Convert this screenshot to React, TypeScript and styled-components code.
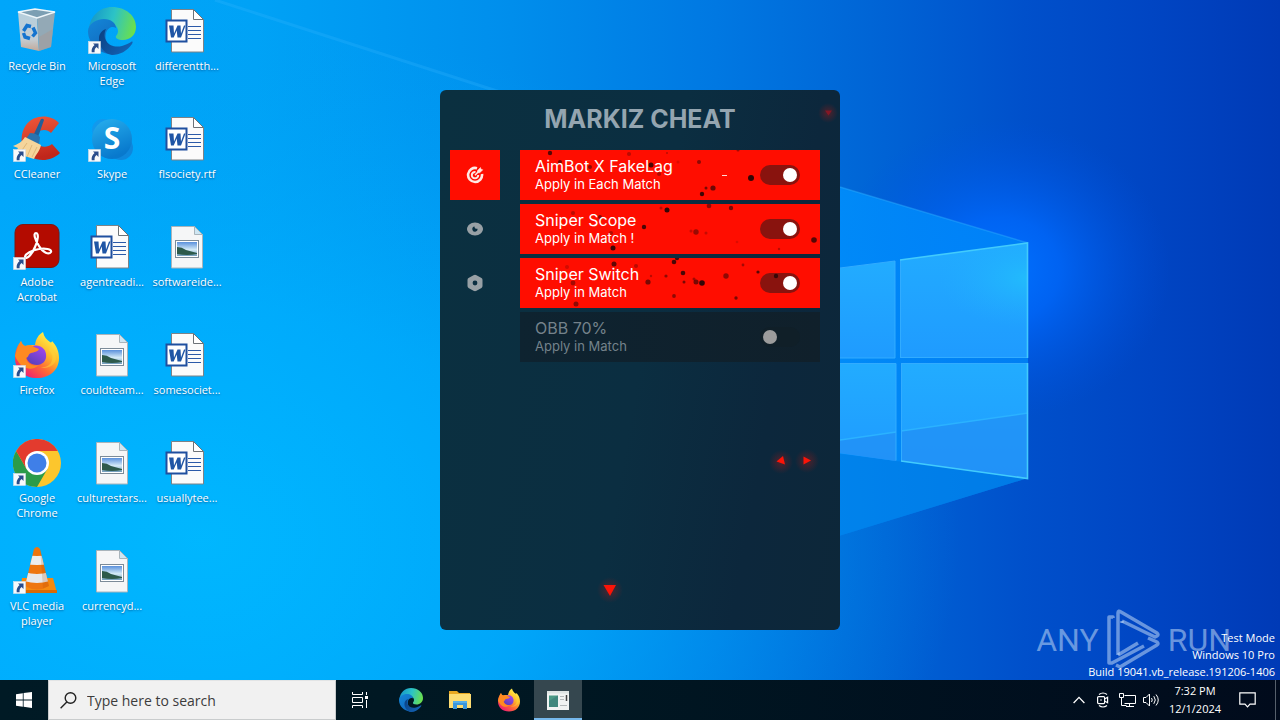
import React, { useId } from "react";
import styled, { createGlobalStyle } from "styled-components";

const UI = `"Open Sans", "Noto Sans", sans-serif`;
const APP = `Inter, "Open Sans", sans-serif`;

const GlobalStyle = createGlobalStyle`
  *, *::before, *::after { box-sizing: border-box; }
  body { margin: 0; font-family: ${UI}; }
  button, input { font: inherit; }
`;

const Page = styled.div`
  position: relative;
  min-height: 100vh;
  display: flex;
  flex-direction: column;
  overflow: hidden;
`;

const Wallpaper = styled.svg`
  position: absolute;
  inset: 0;
  width: 100%;
  height: 100%;
`;

const Desktop = styled.main`
  position: relative;
  flex: 1;
`;

const IconGrid = styled.ul`
  margin: 0;
  padding: 0;
  list-style: none;
  display: grid;
  grid-template-rows: repeat(6, 108px);
  grid-auto-columns: 74px;
  grid-auto-flow: column;
  column-gap: 1px;
  justify-content: start;
`;

const Shortcut = styled.button`
  width: 100%;
  height: 100%;
  padding: 7px 0 0;
  border: 0;
  background: none;
  display: flex;
  flex-direction: column;
  align-items: center;
  justify-content: flex-start;
  gap: 3px;
  color: #fff;
`;

const ShortcutLabel = styled.span`
  font-size: 11px;
  line-height: 15px;
  text-align: center;
  white-space: pre-line;
  text-shadow: 0 1px 2px rgba(0, 30, 80, 0.55);
`;

const Cell = styled.li<{ $column: number }>`
  grid-column: ${(p) => p.$column};
`;

const WindowLayer = styled.div`
  position: absolute;
  inset: 0;
  display: grid;
  place-items: center;
  pointer-events: none;
`;

const CheatWindow = styled.section`
  position: relative;
  width: 400px;
  min-height: 540px;
  border-radius: 6px;
  padding: 0 20px 0 10px;
  pointer-events: auto;
  font-family: ${APP};
  background: linear-gradient(100deg, #0b3040 0%, #0b2e41 50%, #0c273c 78%, #0d2739 100%);
`;

const Title = styled.h1`
  margin: 0;
  padding-left: 10px;
  height: 60px;
  line-height: 58px;
  font-size: 25px;
  font-weight: 700;
  text-align: center;
  color: #94a5b0;
`;

const WindowBody = styled.div`
  display: flex;
  gap: 20px;
`;

const Nav = styled.nav`
  display: flex;
  flex-direction: column;
  gap: 4px;
`;

const NavButton = styled.button<{ $active?: boolean }>`
  width: 50px;
  height: 50px;
  padding: 0;
  border: 0;
  display: grid;
  place-items: center;
  color: ${(p) => (p.$active ? "#ffe9e4" : "#98a0a5")};
  background: ${(p) => (p.$active ? "#ff0d00" : "transparent")};
`;

const Options = styled.div`
  flex: 1;
  display: flex;
  flex-direction: column;
  gap: 4px;
`;

const OptionRow = styled.label<{ $on: boolean }>`
  position: relative;
  height: 50px;
  padding: 0 20px 0 15px;
  display: flex;
  align-items: center;
  justify-content: space-between;
  color: ${(p) => (p.$on ? "#fff" : "#74828b")};
  background: ${(p) => (p.$on ? "#ff0d00" : "linear-gradient(90deg, #0e2330, #10202b)")};
`;

const Specks = styled.svg`
  position: absolute;
  inset: 0;
  width: 100%;
  height: 100%;
`;

const OptionText = styled.span`
  position: relative;
  z-index: 1;
  display: flex;
  flex-direction: column;
`;

const OptionName = styled.span`
  font-size: 16px;
  line-height: 18px;
`;

const OptionHint = styled.span`
  font-size: 13px;
  line-height: 18px;
`;

const Toggle = styled.input`
  appearance: none;
  margin: 0;
  width: 40px;
  height: 20px;
  border-radius: 10px;
  background: #101f28;
  display: flex;
  align-items: center;
  padding: 0 3px;

  &::before {
    content: "";
    width: 14px;
    height: 14px;
    border-radius: 50%;
    background: #9c9c9c;
  }
  &:checked {
    background: #89130e;
    justify-content: flex-end;
  }
  &:checked::before {
    background: #fff;
  }
`;

const Particles = styled.svg`
  position: absolute;
  inset: 0;
  width: 100%;
  height: 100%;
  pointer-events: none;
`;

const Watermark = styled.div`
  position: absolute;
  right: 49px;
  bottom: 8px;
  height: 64px;
  display: flex;
  align-items: center;
  gap: 7px;
  color: rgba(186, 212, 244, 0.56);
  font-family: Roboto, "Liberation Sans", sans-serif;
  font-size: 32px;
  line-height: 64px;
`;

const BuildInfo = styled.div`
  position: absolute;
  right: 5px;
  bottom: 0;
  display: flex;
  flex-direction: column;
  text-align: right;
  font-size: 11px;
  line-height: 17px;
  color: #fff;
`;

const Taskbar = styled.footer`
  position: relative;
  height: 40px;
  display: flex;
  justify-content: space-between;
  background: linear-gradient(90deg, #001a25 0%, #001722 45%, #010b1c 100%);
`;

const TaskGroup = styled.div`
  display: flex;
  gap: 1px;
`;

const TaskButton = styled.button<{ $active?: boolean }>`
  width: 48px;
  height: 40px;
  padding: 0;
  border: 0;
  display: grid;
  place-items: center;
  color: #fff;
  background: ${(p) => (p.$active ? "#35474f" : "transparent")};
  box-shadow: ${(p) => (p.$active ? "inset 0 -2px #76b9ed" : "none")};
`;

const StartGroup = styled.div`
  display: flex;
  padding-right: 2px;
`;

const SearchBox = styled.label`
  width: 288px;
  padding: 0 10px 0 11px;
  display: flex;
  align-items: center;
  gap: 10px;
  background: #f1f1f1;
  border: 1px solid #c9cccd;
  border-top-color: #e2e4e5;
`;

const SearchInput = styled.input`
  flex: 1;
  min-width: 0;
  padding: 0;
  border: 0;
  outline: 0;
  background: none;
  font-size: 14px;
  color: #333;
  &::placeholder {
    color: #3c3c3c;
    opacity: 1;
  }
`;

const Tray = styled.div`
  display: flex;
  align-items: center;
`;

const TrayButton = styled.button<{ $wide?: boolean }>`
  width: ${(p) => (p.$wide ? 40 : 24)}px;
  height: 40px;
  padding: 0;
  border: 0;
  background: none;
  display: grid;
  place-items: center;
  color: #fff;
`;

const Clock = styled.time`
  width: 64px;
  font-size: 11px;
  line-height: 18px;
  text-align: center;
  white-space: pre-line;
  color: #fff;
`;

const ShowDesktop = styled.button`
  width: 5px;
  height: 40px;
  margin-left: 8px;
  padding: 0;
  border: 0;
  border-left: 1px solid #56606c;
  background: none;
`;

/* ---------- desktop icons, all on a 48 unit square ---------- */

const Arrow = () => (
  <g>
    <rect x="0.5" y="34.5" width="12" height="12" fill="#f7f9fb" stroke="#d4dde6" strokeWidth="0.6" />
    <path d="M5 36.500h5.500v5.500l-1.900-1.900c-1.700 1.300-2.200 2.600-2 5.100H3.700c-.4-3 .6-5.200 2.900-7.100z" fill="#294d8c" />
  </g>
);

const RecycleBin = () => {
  const id = useId();
  return (
    <svg width="48" height="48" viewBox="0 0 48 48">
      <defs>
        <linearGradient id={id} x1="0" y1="0" x2="0" y2="1">
          <stop offset="0" stopColor="#b4cfde" />
          <stop offset="0.7" stopColor="#c3cdd3" />
          <stop offset="1" stopColor="#c2a999" />
        </linearGradient>
      </defs>
      <path d="M5 5l19 6 2 33-18-4z" fill={`url(#${id})`} />
      <path d="M24 11l18-6-4 35-12 4z" fill="#93a9b6" />
      <path d="M26 30l14-8-2 18-12 4z" fill="#a39d9b" opacity="0.6" />
      <path d="M5 5l17-3 20 3-18 6z" fill="#7c9fb3" stroke="#eef6fa" strokeWidth="1.400" />
      <g fill="none" stroke="#1474cf" strokeWidth="3.400">
        <path d="M10.500 24l3.500-5.500 4 1" />
        <path d="M20 20.500l2.500 5.500-3 3.500" />
        <path d="M17 31.500l-5-1.500-1.500-4" />
      </g>
    </svg>
  );
};

const EdgeIcon = ({ size = 48 }: { size?: number }) => {
  const id = useId();
  return (
    <svg width={size} height={size} viewBox="0 0 48 48">
      <defs>
        <linearGradient id={id + "a"} x1="0" y1="0.3" x2="1" y2="0.5">
          <stop offset="0" stopColor="#1596c9" />
          <stop offset="0.5" stopColor="#2cc3c6" />
          <stop offset="1" stopColor="#6be04c" />
        </linearGradient>
        <linearGradient id={id + "b"} x1="0" y1="0" x2="0.6" y2="1">
          <stop offset="0" stopColor="#1487d8" />
          <stop offset="1" stopColor="#1068bd" />
        </linearGradient>
        <linearGradient id={id + "c"} x1="0" y1="0" x2="1" y2="0.6">
          <stop offset="0" stopColor="#0b3f80" />
          <stop offset="1" stopColor="#1262b4" />
        </linearGradient>
      </defs>
      <path d="M1 22C2 9 12 0 24 0c14 0 24 9 24 20 0 8-6 13-13 13-5 0-8-2-7-4 1-1 2-3 2-5 0-5-5-9-13-9C9 15 3 18 1 22z" fill={`url(#${id}a)`} />
      <path d="M0 24c0-7 8-12 16-12 7 0 12 4 12 9-3-2-8-1-10 5-2 8 3 16 12 19-3 2-5 3-8 2C10 46 0 36 0 24z" fill={`url(#${id}b)`} />
      <path d="M18 22c-5 11 4 20 16 17 4-1 7-3 9-4 2-1 2 0 1 2C39 44 32 48 24 48c-8-1-14-10-13-17 0-4 3-8 7-9z" fill={`url(#${id}c)`} />
    </svg>
  );
};

const FirefoxIcon = ({ size = 48 }: { size?: number }) => {
  const id = useId();
  return (
    <svg width={size} height={size} viewBox="0 0 48 48">
      <defs>
        <linearGradient id={id + "a"} x1="0.8" y1="0.1" x2="0.2" y2="0.9">
          <stop offset="0" stopColor="#fff04a" />
          <stop offset="0.35" stopColor="#ffb829" />
          <stop offset="0.65" stopColor="#ff6a35" />
          <stop offset="1" stopColor="#f0246d" />
        </linearGradient>
        <linearGradient id={id + "b"} x1="0.8" y1="0" x2="0.2" y2="1">
          <stop offset="0" stopColor="#a646f0" />
          <stop offset="1" stopColor="#5540b8" />
        </linearGradient>
      </defs>
      <path d="M8 10c1 3 2 4 4 5 3-1 6-1 10-1 1-6 3-10 8-13 1 5 4 8 7 10 1 1 2 0 2-1 5 5 7 11 7 17 0 12-9 20-22 20C11 47 2 39 2 27c0-7 2-12 6-17z" fill={`url(#${id}a)`} />
      <path d="M17 16c8-4 15 0 16 7 1 7-4 11-9 11-6 0-11-4-11-10z" fill={`url(#${id}b)`} />
      <path d="M2 25C4 17 7 13 8 10c1 3 2 4 4 5 4-1 7-1 9 1l5 2c-1 3-5 3-8 4-3 1-2 4-5 5 1 6 8 9 13 7-5 5-14 5-19-1-2-3-4-5-5-8z" fill="#ff8a21" />
      <path d="M36 20c3 2 4 6 3 9-1 5-6 8-12 7 6 3 15-1 16-8 0-6-3-9-7-12z" fill="#ffd43a" opacity="0.5" />
    </svg>
  );
};

const CCleanerIcon = () => {
  const id = useId();
  return (
    <svg width="48" height="48" viewBox="0 0 48 48">
      <defs>
        <linearGradient id={id} x1="0" y1="0" x2="0.2" y2="1">
          <stop offset="0" stopColor="#f0573a" />
          <stop offset="0.5" stopColor="#d8412a" />
          <stop offset="1" stopColor="#c0261b" />
        </linearGradient>
      </defs>
      <path d="M46 8C38-1 21-1 13 10c-7 10-6 25 5 32 9 5 21 4 29-4L39 29c-5 4-12 4-15-2-3-6 1-12 7-12 3 0 5 1 7 3z" fill={`url(#${id})`} />
      <path d="M28 4q2-1 3 1l-6 17-5-1z" fill="#215f99" />
      <path d="M17 18q6 0 10 4l-1 8-13-6z" fill="#2b73ae" />
      <path d="M12 22l16 8c-1 6-5 9-7 14L2 38l3-5-5-2c5-2 9-4 12-9z" fill="#f5d59b" />
      <path d="M14 28l-7 10m12-8l-5 12m10-10l-5 10" stroke="#dfb778" fill="none" />
      <Arrow />
    </svg>
  );
};

const SkypeIcon = () => {
  const id = useId();
  return (
    <svg width="48" height="48" viewBox="0 0 48 48">
      <defs>
        <linearGradient id={id} x1="0" y1="0" x2="0.4" y2="1">
          <stop offset="0" stopColor="#28b0ee" />
          <stop offset="1" stopColor="#0879cd" />
        </linearGradient>
      </defs>
      <circle cx="15" cy="15" r="11" fill="#1299ec" />
      <circle cx="33" cy="33" r="12" fill="#0e87dc" />
      <circle cx="24" cy="24" r="20" fill={`url(#${id})`} />
      <text x="24" y="34" fontFamily="Open Sans" fontWeight="700" fontSize="30" fill="#fff" textAnchor="middle">S</text>
      <Arrow />
    </svg>
  );
};

const AcrobatIcon = () => (
  <svg width="48" height="48" viewBox="0 0 48 48">
    <rect x="2" y="1.500" width="44" height="43" rx="8" fill="#b30b00" stroke="#7f1611" />
    <path d="M23 10c-3 0-1 7 3 13 4 7 10 9 12 6 1-3-6-4-12-3-7 1-14 5-14 8 1 3 7-2 10-10 3-6 4-14 1-14z" fill="none" stroke="#fff" strokeWidth="2.200" />
    <Arrow />
  </svg>
);

const ChromeIcon = () => (
  <svg width="48" height="48" viewBox="0 0 48 48">
    <circle cx="24" cy="24" r="24" fill="#fcc62d" />
    <path d="M3.200 12A24 24 0 0 0 24 48l10.400-18H13.600z" fill="#2b9b49" />
    <path d="M3.200 12A24 24 0 0 1 44.800 12H24L13.600 30z" fill="#e33b2e" />
    <circle cx="24" cy="24" r="12" fill="#fff" />
    <circle cx="24" cy="24" r="9.500" fill="#3f7fe8" />
    <Arrow />
  </svg>
);

const VlcIcon = () => {
  const id = useId();
  return (
    <svg width="48" height="48" viewBox="0 0 48 48">
      <defs>
        <clipPath id={id}>
          <path d="M21 2q3-4 6 0l9 37q-12 7-24 0z" />
        </clipPath>
      </defs>
      <path d="M9 31h31l4 15H7z" fill="#f58a10" />
      <path d="M7 43h37v3H7z" fill="#d96a05" />
      <g clipPath={`url(#${id})`}>
        <rect width="48" height="48" fill="#ee760f" />
        <path d="M8 7q16 4 32 0v9q-16 4-32 0z" fill="#eceeef" />
        <path d="M8 24q16 6 32 0v9q-16 6-32 0z" fill="#e6e8ea" />
        <path d="M27 0l14 42H30z" fill="#b14a00" opacity="0.2" />
      </g>
      <Arrow />
    </svg>
  );
};

const WordFile = () => (
  <svg width="48" height="48" viewBox="0 0 48 48">
    <path d="M8.500 2.500h22l10 10v32.500h-32z" fill="#fbfbfb" stroke="#7d8287" />
    <path d="M30.500 2.500v10h10z" fill="#fff" stroke="#6d7277" />
    <path d="M25 19.500h13M25 23.500h13M25 27.500h13M25 31.500h13" stroke="#2c5aa8" />
    <rect x="3.500" y="13.500" width="20" height="21" fill="#fff" stroke="#1f4f9f" strokeWidth="2" />
    <path d="M6 18.500h4.500l.5 8 3.500-8H17.500l.5 8 3-8h1.500l-4.500 12h-3.500l-.8-7-3 7H8z" fill="#1f55a5" />
  </svg>
);

const ImageFile = () => {
  const id = useId();
  return (
    <svg width="48" height="48" viewBox="0 0 48 48">
      <defs>
        <linearGradient id={id} x1="0" y1="0" x2="0" y2="1">
          <stop offset="0" stopColor="#5a90dc" />
          <stop offset="0.55" stopColor="#d4ebf7" />
          <stop offset="1" stopColor="#6f9cbb" />
        </linearGradient>
      </defs>
      <path d="M8.500 3.500h23l8 8v33.500h-31z" fill="#f5f6f7" stroke="#a9b4bb" />
      <path d="M31.500 3.500v8h8z" fill="#cfe6f2" stroke="#a9b4bb" />
      <rect x="12.500" y="17.500" width="23" height="17" fill="#fff" stroke="#7c8b98" />
      <rect x="14" y="19" width="20" height="14" fill={`url(#${id})`} />
      <path d="M14 24q5 0 9 3l11 3v1q-10 2-20 0z" fill="#2d5a4b" />
    </svg>
  );
};

const EdgeShortcut = () => (
  <svg width="48" height="48" viewBox="0 0 48 48">
    <EdgeIcon />
    <Arrow />
  </svg>
);

const FirefoxShortcut = () => (
  <svg width="48" height="48" viewBox="0 0 48 48">
    <FirefoxIcon />
    <Arrow />
  </svg>
);

const shortcuts: { column: number; label: string; Icon: React.FC }[] = [
  { column: 1, label: "Recycle Bin", Icon: RecycleBin },
  { column: 1, label: "CCleaner", Icon: CCleanerIcon },
  { column: 1, label: "Adobe\nAcrobat", Icon: AcrobatIcon },
  { column: 1, label: "Firefox", Icon: FirefoxShortcut },
  { column: 1, label: "Google\nChrome", Icon: ChromeIcon },
  { column: 1, label: "VLC media\nplayer", Icon: VlcIcon },
  { column: 2, label: "Microsoft\nEdge", Icon: EdgeShortcut },
  { column: 2, label: "Skype", Icon: SkypeIcon },
  { column: 2, label: "agentreadi...", Icon: WordFile },
  { column: 2, label: "couldteam...", Icon: ImageFile },
  { column: 2, label: "culturestars...", Icon: ImageFile },
  { column: 2, label: "currencyd...", Icon: ImageFile },
  { column: 3, label: "differentth...", Icon: WordFile },
  { column: 3, label: "flsociety.rtf", Icon: WordFile },
  { column: 3, label: "softwareide...", Icon: ImageFile },
  { column: 3, label: "somesociet...", Icon: WordFile },
  { column: 3, label: "usuallytee...", Icon: WordFile },
];

/* ---------- cheat menu ---------- */

// Each speck: x, y, radius, opacity.
type Speck = [number, number, number, number];

const options: { name: string; hint: string; on: boolean; specks: Speck[]; dash?: boolean }[] = [
  {
    name: "AimBot X FakeLag",
    hint: "Apply in Each Match",
    on: true,
    dash: true,
    specks: [
      [30, 3, 2.2, 0.75], [40, 12, 2, 0.6], [70, 17, 2, 0.5], [109, 4, 2, 0.3], [131, 15, 2.5, 0.8],
      [139, 24, 2, 0.35], [158, 12, 1.5, 0.15], [179, 12, 2, 0.5], [231, 28, 3, 0.9], [193, 38, 2.6, 0.65],
      [186, 38, 1.5, 0.6], [182, 44, 2.2, 0.85], [128, 37, 1.5, 0.6], [218, 0, 1.5, 0.4], [147, 3, 1, 0.3],
    ],
  },
  {
    name: "Sniper Scope",
    hint: "Apply in Match !",
    on: true,
    specks: [
      [147, 6, 2.5, 0.9], [141, 4, 1.5, 0.3], [189, 2, 2.3, 0.5], [211, 4, 2.2, 0.6], [124, 23, 2.2, 0.8],
      [80, 13, 2, 0.5], [53, 9, 2, 0.3], [176, 28, 2.7, 0.45], [186, 29, 1.5, 0.25], [171, 27, 1.5, 0.25],
      [91, 29, 2, 0.35], [93, 44, 2.5, 0.85], [294, 36, 2.8, 0.75], [259, 45, 1.2, 0.3], [217, 38, 1.3, 0.15],
    ],
  },
  {
    name: "Sniper Switch",
    hint: "Apply in Match",
    on: true,
    specks: [
      [94, 6, 2.5, 0.7], [116, 8, 2, 0.3], [154, 4, 2.3, 0.8], [157, 0, 2.2, 0.8], [163, 15, 2.3, 0.8],
      [128, 24, 2.6, 0.6], [131, 18, 1.2, 0.3], [146, 18, 1.6, 0.5], [164, 24, 1.5, 0.6], [176, 24, 2.5, 0.6],
      [174, 21, 1.5, 0.4], [182, 25, 2.8, 0.9], [206, 18, 2.7, 0.5], [223, 7, 1.4, 0.4], [238, 14, 1.6, 0.75],
      [256, 18, 2.2, 0.75], [154, 38, 1.9, 0.5], [216, 40, 1.7, 0.6], [56, 46, 2.5, 0.5], [53, 25, 2.4, 0.4],
      [47, 9, 2, 0.2],
    ],
  },
  { name: "OBB 70%", hint: "Apply in Match", on: false, specks: [] },
];

const TargetIcon = () => (
  <svg width="18" height="18" viewBox="0 0 18 18" fill="none" stroke="currentColor">
    <path d="M11 2.200A7 7 0 1 0 16 8" strokeWidth="2.600" />
    <path d="M9.500 6A3.200 3.200 0 1 0 12.200 9" strokeWidth="2" />
    <path d="M9 9.200L13 5" strokeWidth="1.600" />
    <path d="M11.500 4.500L14.500 1.500l.5 1.800 1.800.5-3 3h-2.300z" fill="currentColor" strokeWidth="0.500" />
  </svg>
);

const EyeIcon = () => (
  <svg width="18" height="18" viewBox="0 0 18 18">
    <path d="M9 2.500c4.500 0 8 3.300 8 6.500s-3.500 6.500-8 6.500S1 12.200 1 9s3.500-6.500 8-6.500z" fill="currentColor" />
    <path d="M8.500 6.500c0 1.500.8 2.400 3 2.300A2.600 2.600 0 1 1 8.500 6.500z" fill="#0b2e40" />
  </svg>
);

const NutIcon = () => (
  <svg width="18" height="18" viewBox="0 0 18 18">
    <path d="M9 .8q.8 0 1.500.5l5 2.800q1 .6 1 1.800v6.200q0 1.200-1 1.800l-5 2.800q-1.500.9-3 0l-5-2.800q-1-.6-1-1.800V5.900q0-1.200 1-1.800l5-2.800Q8.200.8 9 .8z" fill="currentColor" />
    <circle cx="9" cy="9" r="2.400" fill="#0b2e40" />
  </svg>
);

const CheatMenu = () => (
  <CheatWindow aria-label="Markiz Cheat">
    <Title>MARKIZ CHEAT</Title>
    <WindowBody>
      <Nav aria-label="Sections">
        <NavButton $active aria-label="Aim"><TargetIcon /></NavButton>
        <NavButton aria-label="Visuals"><EyeIcon /></NavButton>
        <NavButton aria-label="Settings"><NutIcon /></NavButton>
      </Nav>
      <Options>
        {options.map((o) => (
          <OptionRow key={o.name} $on={o.on}>
            <OptionText>
              <OptionName>{o.name}</OptionName>
              <OptionHint>{o.hint}</OptionHint>
            </OptionText>
            <Toggle type="checkbox" defaultChecked={o.on} />
            <Specks aria-hidden="true">
              {o.specks.map(([x, y, r, a], i) => (
                <circle key={i} cx={x} cy={y} r={r} fill="#1c0607" opacity={a} />
              ))}
              {o.dash && <rect x="202" y="25" width="5" height="1" fill="#ffd9d4" />}
            </Specks>
          </OptionRow>
        ))}
      </Options>
    </WindowBody>
    <Particles viewBox="0 0 400 540" aria-hidden="true">
      <defs>
        <radialGradient id="ember">
          <stop offset="0" stopColor="#ff1200" stopOpacity="0.28" />
          <stop offset="1" stopColor="#ff1200" stopOpacity="0" />
        </radialGradient>
      </defs>
      <circle cx="341" cy="372" r="12" fill="url(#ember)" />
      <circle cx="367" cy="371" r="12" fill="url(#ember)" />
      <circle cx="170" cy="500" r="13" fill="url(#ember)" />
      <circle cx="388" cy="23" r="10" fill="url(#ember)" />
      <path d="M336.500 371.500l6.500-5.500 2 8.500z" fill="#fb1408" />
      <path d="M363.500 366.500l7.500 4-7.500 4z" fill="#fb1408" />
      <path d="M163.500 495h12.500l-6 11z" fill="#fb1408" />
      <path d="M385 20.500h7l-3.500 5z" fill="#a01322" opacity="0.7" />
    </Particles>
  </CheatWindow>
);

/* ---------- wallpaper ---------- */

const Hero = () => (
  <Wallpaper viewBox="0 0 1280 720" preserveAspectRatio="xMidYMid slice" aria-hidden="true">
    <defs>
      <linearGradient id="sky" x1="0" y1="0" x2="1" y2="0">
        <stop offset="0" stopColor="#00a6fa" />
        <stop offset="0.2" stopColor="#00a2f6" />
        <stop offset="0.4" stopColor="#008eec" />
        <stop offset="0.56" stopColor="#0078e2" />
        <stop offset="0.68" stopColor="#0065d6" />
        <stop offset="0.8" stopColor="#0050cb" />
        <stop offset="0.9" stopColor="#0045c3" />
        <stop offset="1" stopColor="#003ab6" />
      </linearGradient>
      <radialGradient id="low" gradientUnits="userSpaceOnUse" cx="0" cy="0" r="1" gradientTransform="translate(200 540) scale(760 520)">
        <stop offset="0" stopColor="#00b8ff" stopOpacity="0.95" />
        <stop offset="0.45" stopColor="#00b0ff" stopOpacity="0.7" />
        <stop offset="1" stopColor="#00a0f4" stopOpacity="0" />
      </radialGradient>
      <radialGradient id="glow" gradientUnits="userSpaceOnUse" cx="0" cy="0" r="1" gradientTransform="translate(1000 270) scale(170 150)">
        <stop offset="0" stopColor="#0072ff" />
        <stop offset="0.35" stopColor="#0068fc" stopOpacity="0.8" />
        <stop offset="1" stopColor="#0052e0" stopOpacity="0" />
      </radialGradient>
      <linearGradient id="pane" x1="0" y1="0" x2="0" y2="1">
        <stop offset="0" stopColor="#22acff" />
        <stop offset="1" stopColor="#1f9bff" />
      </linearGradient>
      <radialGradient id="shine" gradientUnits="userSpaceOnUse" cx="0" cy="0" r="1" gradientTransform="translate(1028 278) scale(90 50)">
        <stop offset="0" stopColor="#22bbfc" />
        <stop offset="1" stopColor="#22acff" stopOpacity="0" />
      </radialGradient>
      <linearGradient id="beam" x1="0" y1="0" x2="1" y2="0">
        <stop offset="0" stopColor="#00b4ff" stopOpacity="0" />
        <stop offset="1" stopColor="#009cff" stopOpacity="0.4" />
      </linearGradient>
      <linearGradient id="ray" x1="0" y1="0" x2="1" y2="0">
        <stop offset="0" stopColor="#0092ff" />
        <stop offset="1" stopColor="#0084f6" />
      </linearGradient>
    </defs>
    <rect width="1280" height="720" fill="url(#sky)" />
    <rect width="1280" height="720" fill="url(#low)" />
    <path d="M215 0L500 92 1028 243V478L840 535 400 660 0 680V0z" fill="url(#beam)" opacity="0.4" />
    <rect width="1280" height="720" fill="url(#glow)" />
    <path d="M780 169l248 74v235l-248 76z" fill="url(#ray)" opacity="0.85" />
    <path d="M780 446l248 32-248 76z" fill="#0077dc" opacity="0.45" />
    <path d="M215 0L500 92" stroke="#38b6ff" strokeWidth="3" opacity="0.25" fill="none" />
    <path d="M840 187l188 56" stroke="#38b6ff" strokeWidth="1.500" opacity="0.35" fill="none" />
    <g fill="url(#pane)">
      <path d="M780 276l115-15v97H780z" />
      <path d="M900 260l128-17v115H900z" />
      <path d="M780 363h116v98l-116-16z" />
      <path d="M901 363h127v116l-127-18z" />
    </g>
    <path d="M900 260l128-17v115H900z" fill="url(#shine)" />
    <path d="M840 440l56-8v29l-56-8zM901 431l127-18v66l-127-18z" fill="#228ff5" opacity="0.7" />
    <path d="M840 440l56-8M901 431l127-18" stroke="#2bb2ff" strokeWidth="1.500" />
    <path d="M840 268l55-7v97h-55M900.500 358v-98M901 363.500h127M840 363.500h56v97M901.500 363v98M901 357.500h127" fill="none" stroke="#32acff" />
    <path d="M900 260l127.500-17v115M1027.500 363v115.500L901 461" fill="none" stroke="#42cbfc" strokeWidth="1.600" />
  </Wallpaper>
);

/* ---------- taskbar glyphs ---------- */

const StartGlyph = () => (
  <svg width="16" height="16" viewBox="0 0 16 16" fill="#fff">
    <path d="M0 2.200l6.800-1v6.300H0zM7.600 1.100L16 0v7.500H7.600zM0 8.400h6.800v6.300L0 13.800zM7.600 8.400H16V16l-8.400-1.200z" />
  </svg>
);

const SearchGlyph = () => (
  <svg width="17" height="17" viewBox="0 0 17 17" fill="none" stroke="#222" strokeWidth="1.400">
    <circle cx="10.500" cy="6" r="5.300" />
    <path d="M6.800 10L.6 16.200" />
  </svg>
);

const TaskViewGlyph = () => (
  <svg width="16" height="16" viewBox="0 0 16 16" fill="none" stroke="#fff">
    <path d="M.5 0v2.500h10V0M.5 16v-2.500h10V16M.5 5.500h10v5H.5zM14.500 0v3M14.500 8v8" />
    <path d="M13 4h3v3h-3z" fill="#fff" stroke="none" />
  </svg>
);

const FolderGlyph = () => (
  <svg width="22" height="20" viewBox="0 0 22 20">
    <path d="M0 1h8l2 2h11v4H0z" fill="#e9a821" />
    <path d="M0 4h22v14H0z" fill="#fddc72" />
    <path d="M4 11h14v8h-4v-4H8v4H4z" fill="#3a96dd" />
    <path d="M4 11h14v2H4z" fill="#54aeea" />
  </svg>
);

const ProgramGlyph = () => (
  <svg width="22" height="19" viewBox="0 0 22 19">
    <path d="M0 0h22v19H0z" fill="#f1f3f2" />
    <path d="M0 0h22v2.500H0z" fill="#dfe5e4" />
    <path d="M2 4.500h9V16H2z" fill="#4b9a86" />
    <path d="M2 10l9-5.500V16H2z" fill="#397c78" opacity="0.6" />
    <path d="M13 5.500h4M13 8.500h4M13 14.500h7" stroke="#b4b9ba" />
    <path d="M19.500 4v6" stroke="#444" strokeWidth="1.500" />
  </svg>
);

const ChevronGlyph = () => (
  <svg width="12" height="8" viewBox="0 0 12 8" fill="none" stroke="#fff" strokeWidth="1.300">
    <path d="M.6 7L6 1.400 11.400 7" />
  </svg>
);

const MeetGlyph = () => (
  <svg width="14" height="18" viewBox="0 0 14 18" fill="none" stroke="#fff" strokeWidth="1.200">
    <path d="M3 3.500q4-3 8 0M3 14.500q4 3 8 0" />
    <rect x="1.600" y="5.600" width="7" height="7" rx="1" />
    <path d="M8.600 8l3-1.800v5.600l-3-1.800" />
    <circle cx="5" cy="9" r="0.800" fill="#fff" stroke="none" />
  </svg>
);

const NetworkGlyph = () => (
  <svg width="17" height="15" viewBox="0 0 17 15" fill="none" stroke="#fff">
    <path d="M5.500 2.500h11v8h-11M10.500 10.500v3M7 13.500h8" />
    <path d="M.5.500h4v4h-4zM2.500 4.500v8h5" />
  </svg>
);

const VolumeGlyph = () => (
  <svg width="17" height="14" viewBox="0 0 17 14" fill="none" stroke="#fff">
    <path d="M.5 4.500h2.500L6.500 1v12L3 9.500H.500z" />
    <path d="M8.500 5q1.500 2 0 4M10.800 3.200q3 3.800 0 7.600M13 1.500q4.500 5.500 0 11" />
  </svg>
);

const NoticeGlyph = () => (
  <svg width="17" height="16" viewBox="0 0 17 16" fill="none" stroke="#fff" strokeWidth="1.200">
    <path d="M.8.800h15.400v11.400h-5.200L8.500 14.800 6 12.200H.800z" />
  </svg>
);

const RunLogo = () => (
  <svg width="55" height="62" viewBox="0 0 55 62" fill="none" stroke="currentColor" strokeWidth="3.500" strokeLinejoin="round">
    <path d="M7 9V8H3v46h3L38 37" />
    <path d="M12 46V4q0-3 3-1l36 21q2 2 0 3l-2 1L16 12" />
    <path d="M12 46L32 34M16 12v2M42 29l9 4q2 2 0 3L14 58l-4-2" />
  </svg>
);

export default function App() {
  return (
    <Page>
      <GlobalStyle />
      <Hero />
      <Desktop>
        <IconGrid>
          {shortcuts.map(({ column, label, Icon }) => (
            <Cell key={label} $column={column}>
              <Shortcut>
                <Icon />
                <ShortcutLabel>{label}</ShortcutLabel>
              </Shortcut>
            </Cell>
          ))}
        </IconGrid>
        <Watermark>
          <span>ANY</span>
          <RunLogo />
          <span>RUN</span>
        </Watermark>
        <BuildInfo>
          <span>Test Mode</span>
          <span>Windows 10 Pro</span>
          <span>Build 19041.vb_release.191206-1406</span>
        </BuildInfo>
      </Desktop>
      <Taskbar>
        <TaskGroup>
          <StartGroup>
            <TaskButton aria-label="Start"><StartGlyph /></TaskButton>
            <SearchBox>
              <SearchGlyph />
              <SearchInput type="text" placeholder="Type here to search" aria-label="Search" />
            </SearchBox>
            <TaskButton aria-label="Task View"><TaskViewGlyph /></TaskButton>
          </StartGroup>
          <TaskButton aria-label="Microsoft Edge"><EdgeIcon size={24} /></TaskButton>
          <TaskButton aria-label="File Explorer"><FolderGlyph /></TaskButton>
          <TaskButton aria-label="Firefox"><FirefoxIcon size={24} /></TaskButton>
          <TaskButton $active aria-label="Markiz Cheat"><ProgramGlyph /></TaskButton>
        </TaskGroup>
        <Tray>
          <TrayButton aria-label="Show hidden icons"><ChevronGlyph /></TrayButton>
          <TrayButton aria-label="Meet Now"><MeetGlyph /></TrayButton>
          <TrayButton aria-label="Network"><NetworkGlyph /></TrayButton>
          <TrayButton aria-label="Volume"><VolumeGlyph /></TrayButton>
          <Clock>{"7:32 PM\n12/1/2024"}</Clock>
          <TrayButton $wide aria-label="Notifications"><NoticeGlyph /></TrayButton>
          <ShowDesktop aria-label="Show desktop" />
        </Tray>
      </Taskbar>
      <WindowLayer>
        <CheatMenu />
      </WindowLayer>
    </Page>
  );
}
